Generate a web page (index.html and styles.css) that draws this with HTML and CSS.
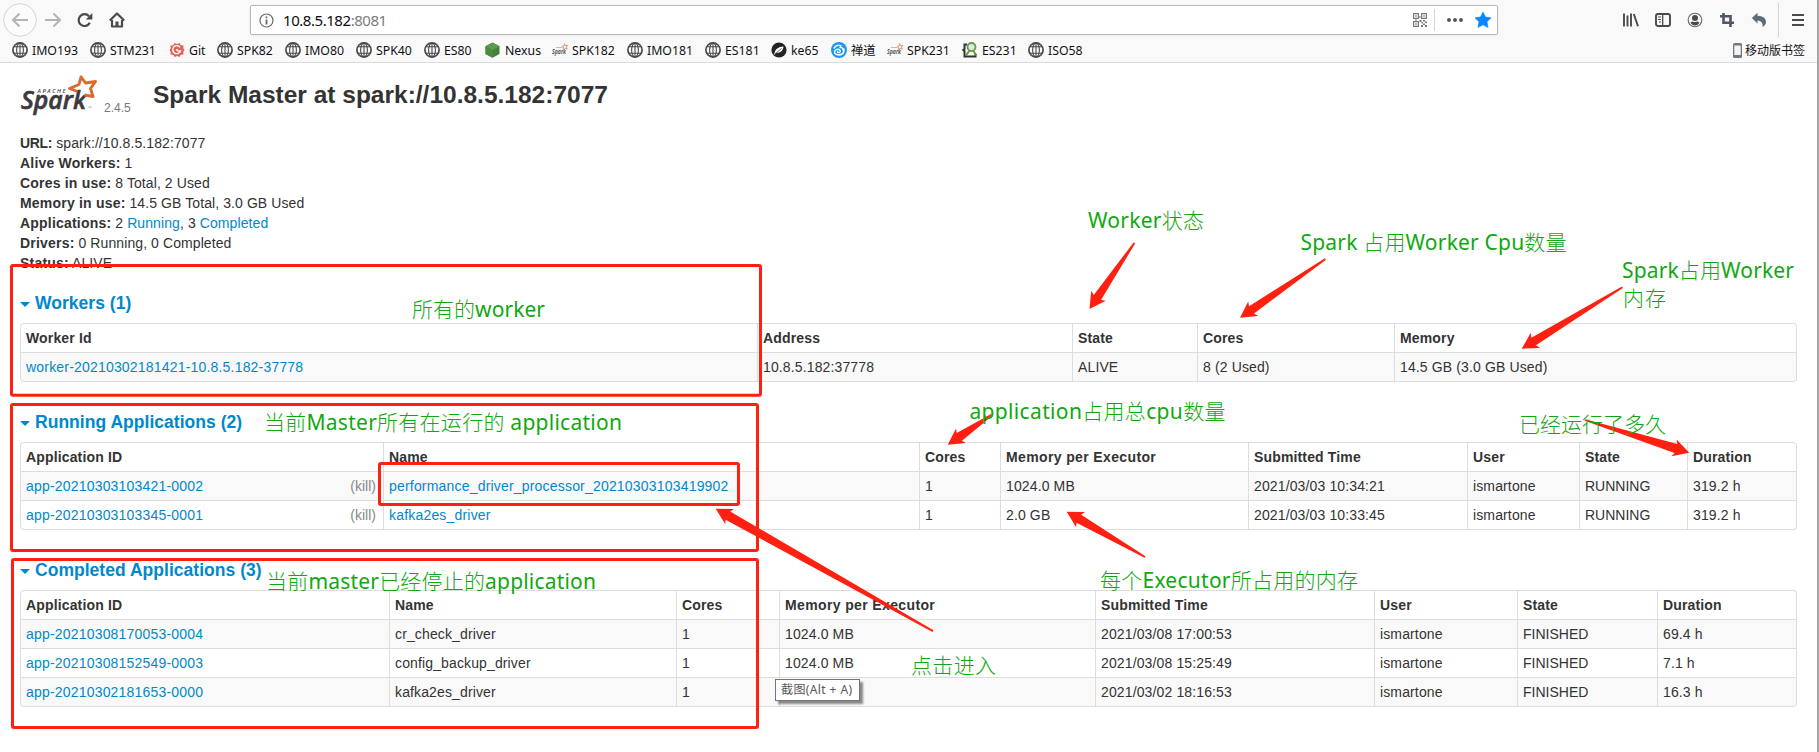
FILE: index.html
```html
<!DOCTYPE html>
<html lang="zh-CN">
<head>
<meta charset="utf-8">
<title>Spark Master at spark://10.8.5.182:7077</title>
<link rel="stylesheet" href="styles.css">
</head>
<body>
<svg class="defs" width="0" height="0">
  <defs>
    <symbol id="globe" viewBox="0 0 16 16"><g fill="none" stroke="#4a4a4c" stroke-width="1.1"><circle cx="8" cy="8" r="7.1" stroke-width="1.7"/><ellipse cx="8" cy="8" rx="3.4" ry="7"/><path d="M8 1v14M2 4.8h12M2 11.2h12"/></g></symbol>
    <symbol id="sparkmini" viewBox="0 0 16 16"><text x="0" y="12" class="mini-word" textLength="14" lengthAdjust="spacingAndGlyphs">Spark</text><path d="M12.600 1.500 13.400 3.800 15.600 3.300 14.400 5 15.300 7 13 6.500 11.500 7.500 11.800 5.500 10 4.600 12 4Z" fill="none" stroke="#e58a62" stroke-width=".9"/><path d="M4 5.500h6" stroke="#aaa" stroke-width=".8"/></symbol>
  </defs>
</svg>
<div class="window">
  <header class="chrome">
    <div class="toolbar">
      <div class="nav">
        <svg width="34" height="34" viewBox="0 0 34 34"><circle cx="17" cy="17" r="16.300" fill="#fbfbfb" stroke="#d4d4d5"/><path d="M25 17H10.500M16.500 10.500 10 17l6.500 6.500" fill="none" stroke="#b4b4b6" stroke-width="2"/></svg>
        <svg width="16" height="16" viewBox="0 0 16 16"><path d="M0 8h14M8.500 1.500 15 8l-6.500 6.500" fill="none" stroke="#b4b4b6" stroke-width="2"/></svg>
        <svg width="16" height="16" viewBox="0 0 16 16"><path d="M12.800 10.800A5.900 5.900 0 1 1 12 4.200" fill="none" stroke="#4a4a4c" stroke-width="2.200"/><path d="M15.300 1v6.500H8.800Z" fill="#4a4a4c"/></svg>
        <svg width="16" height="16" viewBox="0 0 16 16"><path d="M.8 8.500 8 1.500l7.200 7M3 8v6.500h10V8" fill="none" stroke="#4a4a4c" stroke-width="2.200" stroke-linejoin="round"/><path d="M6.500 14V9.500h3V14Z" fill="#4a4a4c"/></svg>
      </div>
      <div class="urlbar">
        <svg width="15" height="15" viewBox="0 0 15 15"><circle cx="7.500" cy="7.500" r="6.500" fill="none" stroke="#66666a" stroke-width="1.200"/><path d="M7.500 6.500v5M7.500 3.500v1.800" stroke="#66666a" stroke-width="1.800"/></svg>
        <div class="url"><b>10.8.5.182</b>:8081</div>
        <div class="url-actions">
          <svg class="qr" width="14" height="14" viewBox="0 0 14 14"><g fill="none" stroke="#76797e" stroke-width="1.200"><path d="M.6.6h4.800v4.800H.6ZM8.600.6h4.800v4.800H8.600ZM.6 8.600h4.800v4.800H.6Z"/></g><path d="M2.300 2.300h1.400v1.400H2.300ZM10.300 2.300h1.400v1.400h-1.400ZM2.300 10.300h1.400v1.400H2.300ZM6.500 3h1v2h-1ZM6.500 7h2v2h-2ZM10 7h2v1.500h-2ZM8.500 9H10v1.500H8.500ZM12 8.500h2V10h-2ZM10 10.500h2V12h-2ZM8 12h2v2H8ZM12 12h2v2h-2ZM2 6.500h2v1H2Z" fill="#76797e"/></svg>
          <span class="vline"></span>
          <svg class="dots" width="16" height="16" viewBox="0 0 16 16"><g fill="#58585b"><circle cx="2" cy="8" r="2"/><circle cx="8" cy="8" r="2"/><circle cx="14" cy="8" r="2"/></g></svg>
          <svg class="fav" width="16" height="16" viewBox="0 0 16 16"><path d="M8 0 10.500 5 16 5.800 12 9.800 13 15.500 8 12.800 3 15.500 4 9.800 0 5.800 5.500 5Z" fill="#0a84ff" stroke="#0a84ff" stroke-width=".6" stroke-linejoin="round"/></svg>
        </div>
      </div>
      <div class="tools">
        <svg width="16" height="16" viewBox="0 0 16 16"><path d="M1 1.500v13M4.500 3.500v11M8 1.500v13M10.800 2l4.200 12.300" fill="none" stroke="#4a4a4c" stroke-width="1.900"/></svg>
        <svg width="16" height="16" viewBox="0 0 16 16"><rect x="1" y="2" width="14" height="12" rx="2" fill="none" stroke="#4a4a4c" stroke-width="1.900"/><path d="M7.700 2v12" stroke="#4a4a4c" stroke-width="1.300"/><path d="M3 5h3M3 7.500h3M4 10h2" stroke="#4a4a4c"/></svg>
        <svg width="16" height="16" viewBox="0 0 16 16"><circle cx="8" cy="8" r="6.800" fill="none" stroke="#66666a" stroke-width="1.100"/><circle cx="8" cy="6" r="3" fill="#4a4a4c"/><path d="M3.500 10.500Q5 9.500 6 9.500 8 10.500 10 9.500q1 0 2.500 1-1.500 3-4.500 3t-4.500-3Z" fill="#4a4a4c"/></svg>
        <svg width="16" height="16" viewBox="0 0 16 16"><path d="M1 4.300h10.500V15M4.500 1v9.700H15" fill="none" stroke="#4d5864" stroke-width="2.600"/></svg>
        <svg width="16" height="16" viewBox="0 0 16 16"><path d="M.8 6 6.500.8v3Q15 4.200 15 10 15 13 11.500 15 12.500 9 6.500 8.500V11.500Z" fill="#5f6b78"/></svg>
      </div>
      <span class="menu-line"></span>
      <svg class="menu" width="12" height="14" viewBox="0 0 12 14"><path d="M0 2h12M0 7h12M0 12h12" stroke="#4a4a4c" stroke-width="2"/></svg>
    </div>
    <div class="bookmarks">
      <div class="bm"><svg><use href="#globe"/></svg><span>IMO193</span></div>
      <div class="bm"><svg><use href="#globe"/></svg><span>STM231</span></div>
      <div class="bm"><svg viewBox="0 0 16 16"><path d="M5.500 1 8 2 10.500 1l1.300 2.200 2.700.3-.2 2.700L15.500 8l-1.200 1.800.2 2.700-2.700.3L10.500 15 8 14l-2.500 1-1.300-2.200-2.700-.3.2-2.700L.5 8l1.200-1.800-.2-2.700 2.700-.3Z" fill="#e26058"/><path d="M11 5.300A4 4 0 1 0 11.500 9H8.500" fill="none" stroke="#fff" stroke-width="1.400"/><circle cx="8" cy="8" r="1.100" fill="#fff"/></svg><span>Git</span></div>
      <div class="bm"><svg><use href="#globe"/></svg><span>SPK82</span></div>
      <div class="bm"><svg><use href="#globe"/></svg><span>IMO80</span></div>
      <div class="bm"><svg><use href="#globe"/></svg><span>SPK40</span></div>
      <div class="bm"><svg><use href="#globe"/></svg><span>ES80</span></div>
      <div class="bm"><svg viewBox="0 0 16 16"><path d="M7.500.5 14.500 4.200V12L7.500 15.800.5 12V4.200Z" fill="#43803a"/><path d="M7.500.5 14.500 4.200 7.500 8 .5 4.200Z" fill="#5c9b4e"/><path d="M7.500 8v7.800L.5 12V4.200Z" fill="#4b8b40"/></svg><span>Nexus</span></div>
      <div class="bm"><svg><use href="#sparkmini"/></svg><span>SPK182</span></div>
      <div class="bm"><svg><use href="#globe"/></svg><span>IMO181</span></div>
      <div class="bm"><svg><use href="#globe"/></svg><span>ES181</span></div>
      <div class="bm"><svg viewBox="0 0 16 16"><circle cx="8" cy="8" r="7.600" fill="#222326"/><path d="M3.500 11Q4.500 5 12.500 4.500 12 11 5.500 11L3 13Z" fill="#fff"/><path d="M4 12 10.500 6.500" stroke="#222326" stroke-width=".7"/></svg><span>ke65</span></div>
      <div class="bm"><svg viewBox="0 0 16 16"><circle cx="8" cy="8" r="8" fill="#1597f2"/><path d="M3 6Q6 2 10 4M13 7Q13.500 12.500 8 13 3 12.500 3.500 9.500 5 6.500 8 7.500 10.500 9 8.500 10.500 6.500 11 6.500 9.500M9 5.500Q12 5 12 8" fill="none" stroke="#fff" stroke-width="1.400" stroke-linecap="round"/></svg><span>禅道</span></div>
      <div class="bm"><svg><use href="#sparkmini"/></svg><span>SPK231</span></div>
      <div class="bm"><svg viewBox="0 0 16 16"><path d="M5 2.500H2.500V7L1.300 8l1.200 1V14.500H13.500V12" fill="none" stroke="#333" stroke-width="2"/><circle cx="9.500" cy="5" r="4" fill="#d6e9f5" stroke="#6b9a3c" stroke-width="1.800"/><path d="M7.500 8.500 4 13.500M11 8.500l3.500 5" stroke="#6b9a3c" stroke-width="2"/></svg><span>ES231</span></div>
      <div class="bm"><svg><use href="#globe"/></svg><span>ISO58</span></div>
      <div class="mobile"><svg width="9" height="15" viewBox="0 0 9 15"><rect width="9" height="15" rx="1.500" fill="#717880"/><rect x="1.300" y="2.500" width="6.400" height="9.500" fill="#f4f4f6"/></svg><span>移动版书签</span></div>
    </div>
  </header>

  <main class="page">
    <div class="title">
      <svg class="logo" width="80" height="48" viewBox="0 0 80 48" role="img" aria-label="Apache Spark">
        <text class="apache" x="17.500" y="22.500" textLength="28">APACHE</text>
        <text class="word" x="1" y="39" textLength="65" lengthAdjust="spacingAndGlyphs">Spark</text>
        <path d="M64.500 25 73 26.500 70.500 18.500 75.500 11.500 65.500 13 61 6.800 59 14.500 49.500 18.500 57.500 21.500" fill="none" stroke="#db6a2b" stroke-width="2.900" stroke-linejoin="round"/>
        <text class="tm" x="67.500" y="39">™</text>
      </svg>
      <span class="version">2.4.5</span>
      <h3>Spark Master at spark://10.8.5.182:7077</h3>
    </div>
    <ul class="info">
      <li><strong>URL:</strong> spark://10.8.5.182:7077</li>
      <li><strong>Alive Workers:</strong> 1</li>
      <li><strong>Cores in use:</strong> 8 Total, 2 Used</li>
      <li><strong>Memory in use:</strong> 14.5 GB Total, 3.0 GB Used</li>
      <li><strong>Applications:</strong> 2 <a>Running</a>, 3 <a>Completed</a></li>
      <li><strong>Drivers:</strong> 0 Running, 0 Completed</li>
      <li><strong>Status:</strong> ALIVE</li>
    </ul>

    <h4><i class="caret"></i>Workers (1)</h4>
    <table>
      <colgroup><col class="w1"><col class="w2"><col class="w3"><col class="w4"><col></colgroup>
      <thead><tr><th>Worker Id</th><th>Address</th><th>State</th><th>Cores</th><th>Memory</th></tr></thead>
      <tbody><tr><td><a>worker-20210302181421-10.8.5.182-37778</a></td><td>10.8.5.182:37778</td><td>ALIVE</td><td>8 (2 Used)</td><td>14.5 GB (3.0 GB Used)</td></tr></tbody>
    </table>

    <h4><i class="caret"></i>Running Applications (2)</h4>
    <table>
      <colgroup><col class="r1"><col class="r2"><col class="r3"><col class="r4"><col class="r5"><col class="r6"><col class="r7"><col></colgroup>
      <thead><tr><th>Application ID</th><th>Name</th><th>Cores</th><th class="mem">Memory per Executor</th><th>Submitted Time</th><th>User</th><th>State</th><th>Duration</th></tr></thead>
      <tbody>
        <tr><td><a>app-20210303103421-0002</a><span class="kill">(kill)</span></td><td><a>performance_driver_processor_20210303103419902</a></td><td>1</td><td>1024.0 MB</td><td>2021/03/03 10:34:21</td><td>ismartone</td><td class="state">RUNNING</td><td>319.2 h</td></tr>
        <tr><td><a>app-20210303103345-0001</a><span class="kill">(kill)</span></td><td><a>kafka2es_driver</a></td><td>1</td><td>2.0 GB</td><td>2021/03/03 10:33:45</td><td>ismartone</td><td class="state">RUNNING</td><td>319.2 h</td></tr>
      </tbody>
    </table>

    <h4><i class="caret"></i>Completed Applications (3)</h4>
    <table>
      <colgroup><col class="c1"><col class="c2"><col class="c3"><col class="c4"><col class="c5"><col class="c6"><col class="c7"><col></colgroup>
      <thead><tr><th>Application ID</th><th>Name</th><th>Cores</th><th class="mem">Memory per Executor</th><th>Submitted Time</th><th>User</th><th>State</th><th>Duration</th></tr></thead>
      <tbody>
        <tr><td><a>app-20210308170053-0004</a></td><td>cr_check_driver</td><td>1</td><td>1024.0 MB</td><td>2021/03/08 17:00:53</td><td>ismartone</td><td class="state">FINISHED</td><td>69.4 h</td></tr>
        <tr><td><a>app-20210308152549-0003</a></td><td>config_backup_driver</td><td>1</td><td>1024.0 MB</td><td>2021/03/08 15:25:49</td><td>ismartone</td><td class="state">FINISHED</td><td>7.1 h</td></tr>
        <tr><td><a>app-20210302181653-0000</a></td><td>kafka2es_driver</td><td>1</td><td></td><td>2021/03/02 18:16:53</td><td>ismartone</td><td class="state">FINISHED</td><td>16.3 h</td></tr>
      </tbody>
    </table>
  </main>
</div>

<svg class="notes" width="1819" height="752" viewBox="0 0 1819 752">
  <g class="boxes">
    <rect x="11.500" y="265.500" width="749" height="129.700" rx="1.500"/>
    <rect x="11.500" y="404.500" width="746" height="146" rx="1.500"/>
    <rect x="12.500" y="559.500" width="745" height="168" rx="1.500"/>
    <rect x="379.500" y="463.500" width="359" height="41" rx="1.500"/>
  </g>
  <g class="arrows">
    <path transform="translate(1089.5 309) rotate(-55.8)" d="M0 0 16-8.800 14-4.400 79.800-.9V.9L14 4.400 16 8.800Z"/>
    <path transform="translate(1240 317.7) rotate(-34.5)" d="M0 0 16-8.800 14-4.400 103.700-.9V.9L14 4.400 16 8.800Z"/>
    <path transform="translate(1521.7 348.7) rotate(-31.35)" d="M0 0 16-8.800 14-4.400 118-.9V.9L14 4.400 16 8.800Z"/>
    <path transform="translate(947.7 444.7) rotate(-34.1)" d="M0 0 16-8.800 14-4.600 54.700-.9V.9L14 4.600 16 8.800Z"/>
    <path transform="translate(1689.3 452.7) rotate(197.4)" d="M0 0 16-8.800 14-4.600 109.300-.9V.9L14 4.600 16 8.800Z"/>
    <path transform="translate(715.7 508.7) rotate(29.4)" d="M0 0 16-8.800 14-4.800 249.400-.9V.9L14 4.800 16 8.800Z"/>
    <path transform="translate(1066.7 511.7) rotate(30.05)" d="M0 0 16-8.800 14-4.600 90.500-.9V.9L14 4.600 16 8.800Z"/>
  </g>
  <g class="labels">
    <text x="412" y="317" textLength="133">所有的<tspan>worker</tspan></text>
    <text x="264" y="430" textLength="358">当前<tspan>Master</tspan>所有在运行的 <tspan>application</tspan></text>
    <text x="266" y="588.500" textLength="330">当前<tspan>master</tspan>已经停止的<tspan>application</tspan></text>
    <text x="1088" y="228" textLength="116"><tspan>Worker</tspan>状态</text>
    <text x="1300.500" y="250" textLength="266"><tspan>Spark </tspan>占用<tspan>Worker Cpu</tspan>数量</text>
    <text x="1622" y="278" textLength="172"><tspan>Spark</tspan>占用<tspan>Worker</tspan></text>
    <text x="1623" y="305.500" textLength="43">内存</text>
    <text x="969.500" y="419" textLength="256"><tspan>application</tspan>占用总<tspan>cpu</tspan>数量</text>
    <text x="1519" y="431.500" textLength="147">已经运行了多久</text>
    <text x="1100" y="588" textLength="258">每个<tspan>Executor</tspan>所占用的内存</text>
    <text x="911" y="672.500" textLength="85">点击进入</text>
  </g>
</svg>
<div class="tooltip">截图(Alt + A)</div>
</body>
</html>
```
FILE: styles.css
```css
* { box-sizing: border-box; }
body {
  margin: 0;
  width: 1819px;
  height: 752px;
  overflow: hidden;
  position: relative;
  background: #fff;
  color: #333;
  font: 14px/20px "Liberation Sans", Arial, sans-serif;
}
svg { display: block; flex: none; }
.defs { position: absolute; }
.window { height: 752px; border-right: 2px solid #a5a5a7; }

/* browser chrome */
.chrome {
  height: 63px;
  background: #f9f9fa;
  border-bottom: 1px solid #dcdcdd;
  font-family: "Noto Sans", "Noto Sans CJK SC", sans-serif;
  color: #111;
}
.toolbar { display: flex; align-items: center; height: 40px; padding-left: 3px; }
.nav { display: flex; align-items: center; width: 247px; }
.nav svg:nth-child(2) { margin-left: 8px; }
.nav svg:nth-child(3) { margin-left: 16px; }
.nav svg:nth-child(4) { margin-left: 16px; }
.urlbar {
  display: flex;
  align-items: center;
  width: 1248px;
  height: 30px;
  padding: 0 6px 0 8px;
  background: #fff;
  border: 1px solid #b9b9bb;
  border-radius: 2px;
  box-shadow: 0 1px 3px rgba(0, 0, 0, .06);
}
.url { margin-left: 9px; font-size: 15px; letter-spacing: -.45px; color: #7b7b7d; }
.url b { font-weight: 400; color: #0c0c0d; }
.url-actions { display: flex; align-items: center; margin-left: auto; }
.vline { width: 1px; height: 22px; margin: 0 12px 0 7px; background: #d7d7d8; }
.fav { margin-left: 12px; }
.tools { display: flex; gap: 16px; margin-left: 125px; }
.menu-line { width: 1px; height: 34px; margin: 0 13px 0 11px; background: #d7d7d8; }
.bookmarks { display: flex; align-items: center; height: 20px; padding: 0 12px; font-size: 12.3px; white-space: nowrap; }
.bm { display: flex; align-items: center; gap: 4px; flex: none; width: 71px; }
.bm svg { width: 16px; height: 16px; }
.bm span, .mobile span { padding-top: 2px; }
.bm:nth-child(1) { width: 78px; }
.bm:nth-child(2) { width: 79px; }
.bm:nth-child(3) { width: 48px; }
.bm:nth-child(4) { width: 68px; }
.bm:nth-child(5) { width: 71px; }
.bm:nth-child(6) { width: 68px; }
.bm:nth-child(7) { width: 61px; }
.bm:nth-child(8) { width: 67px; }
.bm:nth-child(9) { width: 75px; }
.bm:nth-child(10) { width: 78px; }
.bm:nth-child(11) { width: 66px; }
.bm:nth-child(12) { width: 60px; }
.bm:nth-child(13) { width: 56px; }
.bm:nth-child(14) { width: 75px; }
.bm:nth-child(15) { width: 66px; }
.mini-word { font: italic bold 6.500px "Open Sans", sans-serif; fill: #555; }
.mobile { display: flex; align-items: center; gap: 3px; margin-left: auto; font-size: 12px; }

/* page */
.page { padding: 7px 20px 0; }
.title { display: flex; height: 53px; }
.logo { overflow: visible; }
.apache { font: italic 600 5.600px "Open Sans", sans-serif; fill: #3c3a3e; }
.word { font: italic 600 25px "Open Sans", sans-serif; fill: #3c3a3e; stroke: #3c3a3e; stroke-width: .6px; }
.tm { font: 4px "Liberation Sans", sans-serif; fill: #777; }
.version { margin: 28px 0 0 4px; width: 49px; font-size: 12px; color: #777; }
h3 { margin: 5px 0 0; font-size: 24.5px; line-height: 40px; height: 40px; }
.info { list-style: none; margin: 10px 0 20px; padding: 0; letter-spacing: .09px; }
.info strong { letter-spacing: .2px; }
.info li:first-child strong { letter-spacing: -.3px; }
a { color: #08c; }
h4 { display: flex; align-items: center; height: 20px; margin: 0 0 10px; font-size: 17.5px; line-height: 20px; letter-spacing: .03px; color: #08c; }
.caret { margin: 3px 5px 0 0; border: 5px solid transparent; border-top-color: #08c; border-bottom: 0; }
table {
  width: 1777px;
  margin-bottom: 30px;
  table-layout: fixed;
  border-collapse: separate;
  border-spacing: 0;
  border: 1px solid #ddd;
  border-left: 0;
  border-radius: 4px;
}
th, td { padding: 4px 5px; text-align: left; border-left: 1px solid #ddd; white-space: nowrap; }
td { border-top: 1px solid #ddd; height: 29px; letter-spacing: .13px; }
td a { letter-spacing: .19px; }
td.state { letter-spacing: 0; }
th { height: 28px; letter-spacing: .15px; }
th.mem { letter-spacing: .37px; }
tbody tr:nth-child(odd) td { background: #f9f9f9; }
th:first-child { border-top-left-radius: 4px; }
tr:last-child td:first-child { border-bottom-left-radius: 4px; }
tr:last-child td:last-child { border-bottom-right-radius: 4px; }
.kill { float: right; padding-right: 2px; color: #888; letter-spacing: 0; }
.w1 { width: 737px; } .w2 { width: 315px; } .w3 { width: 125px; } .w4 { width: 197px; }
.r1 { width: 363px; } .r2 { width: 536px; } .r3 { width: 81px; } .r4 { width: 248px; }
.r5 { width: 219px; } .r6 { width: 112px; } .r7 { width: 108px; }
.c1 { width: 369px; } .c2 { width: 287px; } .c3 { width: 103px; } .c4 { width: 316px; }
.c5 { width: 279px; } .c6 { width: 143px; } .c7 { width: 140px; }

/* annotations over the page */
.notes { position: absolute; left: 0; top: 0; }
.boxes rect { fill: none; stroke: #ff2012; stroke-width: 3px; }
.arrows path { fill: #ff2012; }
.labels text { font: 300 21px "Noto Sans", "Noto Sans CJK SC", sans-serif; fill: #10a810; }
.labels tspan { font-weight: 400; }
.tooltip {
  position: absolute;
  left: 775px;
  top: 679px;
  width: 85px;
  height: 22px;
  padding-left: 5px;
  border: 1px solid #767676;
  background: #fff;
  box-shadow: 3px 3px 2px rgba(0, 0, 0, .45);
  color: #575757;
  font: 12px/20px "Noto Sans", "Noto Sans CJK SC", sans-serif;
  letter-spacing: .4px;
  white-space: nowrap;
}
```
